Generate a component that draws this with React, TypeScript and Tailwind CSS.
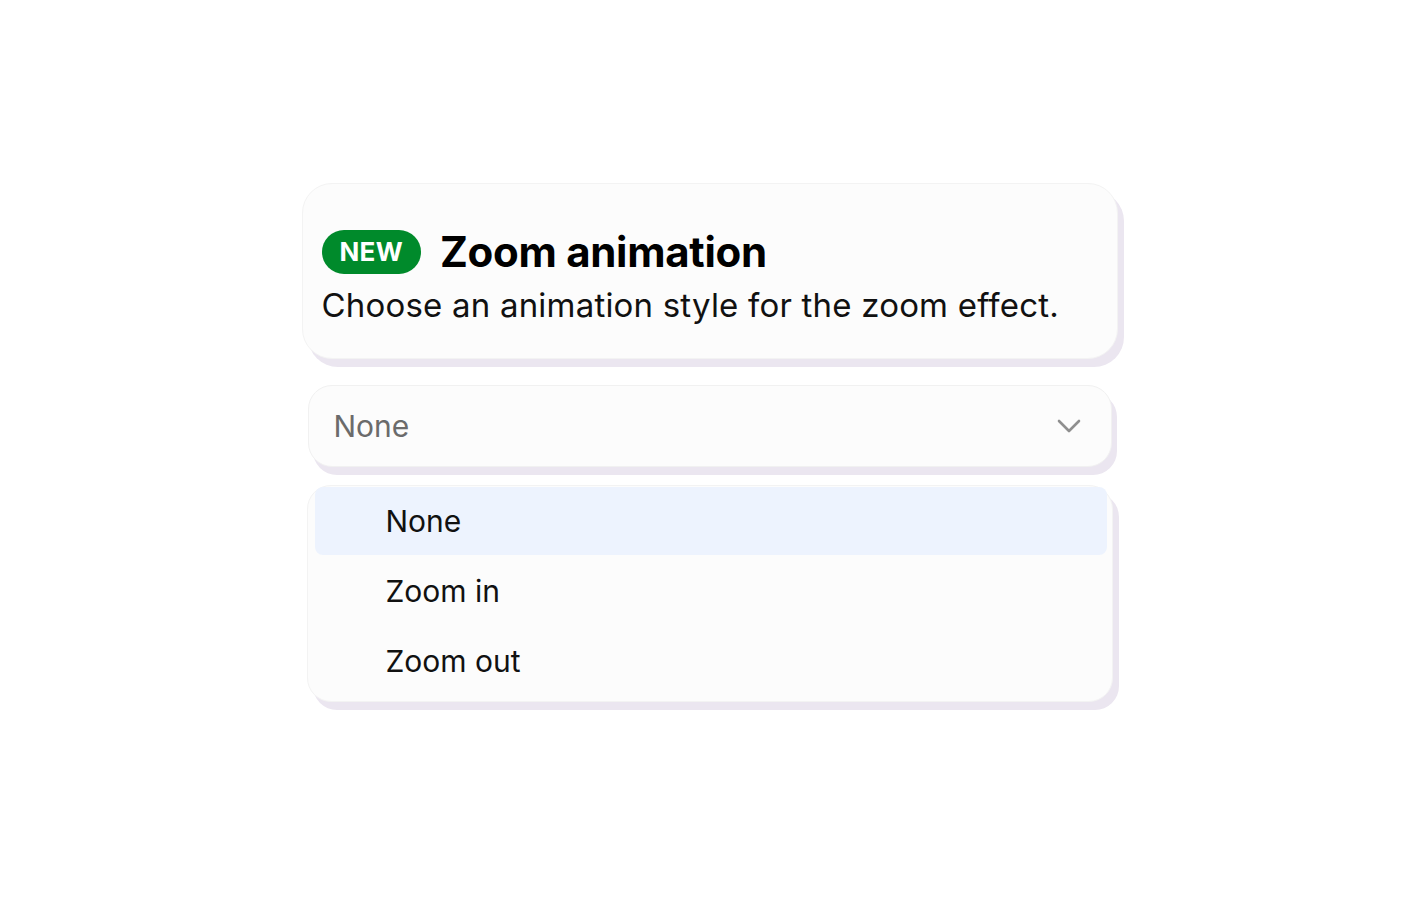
const OPTIONS = ["None", "Zoom in", "Zoom out"];

export default function App() {
  const selected = "None";

  return (
    <div
      className="min-h-screen bg-white flex justify-center pt-[183px]"
      style={{ fontFamily: "Inter, 'Noto Sans', sans-serif" }}
    >
      <div className="w-[816px] flex flex-col translate-x-[-1px]">
        {/* header card */}
        <div className="rounded-[30px] bg-[#fcfcfc] border border-[#f3f3f3] shadow-[6px_8px_0_#ebe6f0] pt-[46px] pb-[33px] px-[19px]">
          <div className="flex items-center gap-[19px]">
            <span className="h-[44px] px-[18px] rounded-full bg-[#008a2b] text-white text-[26px] font-bold tracking-[0.3px] flex items-center leading-none">
              NEW
            </span>
            <h1 className="text-[42px] font-bold text-black leading-[44px] tracking-[-0.3px]">
              Zoom animation
            </h1>
          </div>
          <p className="mt-[11px] text-[33px] leading-[40px] tracking-[0.2px] text-[#111]">
            Choose an animation style for the zoom effect.
          </p>
        </div>

        {/* select trigger */}
        <button className="mt-[26px] mx-[6px] h-[82px] rounded-[24px] bg-[#fcfcfc] border border-[#f1f1f1] shadow-[5px_8px_0_#ebe6f0] flex items-center justify-between pl-[25px] pr-[30px]">
          <span className="text-[30px] text-[#6b6b6b]">{selected}</span>
          <svg width="24" height="14" viewBox="0 0 24 14" fill="none" className="text-[#8f8f8f]">
            <path d="M2 2 L12 12 L22 2" stroke="currentColor" strokeWidth="2.6" strokeLinecap="round" strokeLinejoin="round" />
          </svg>
        </button>

        {/* options list */}
        <ul className="mt-[18px] mx-[5px] rounded-[24px] bg-[#fcfcfc] border border-[#f3f3f3] shadow-[6px_8px_0_#ebe6f0] pt-px pb-[6px] pl-[7px] pr-[5px] flex flex-col gap-[2px]">
          {OPTIONS.map((o) => (
            <li
              key={o}
              className={`h-[68px] rounded-[8px] flex items-center pl-[71px] text-[30px] text-[#111] ${
                o === selected ? "bg-[#edf3fe]" : ""
              }`}
            >
              {o}
            </li>
          ))}
        </ul>
      </div>
    </div>
  );
}
